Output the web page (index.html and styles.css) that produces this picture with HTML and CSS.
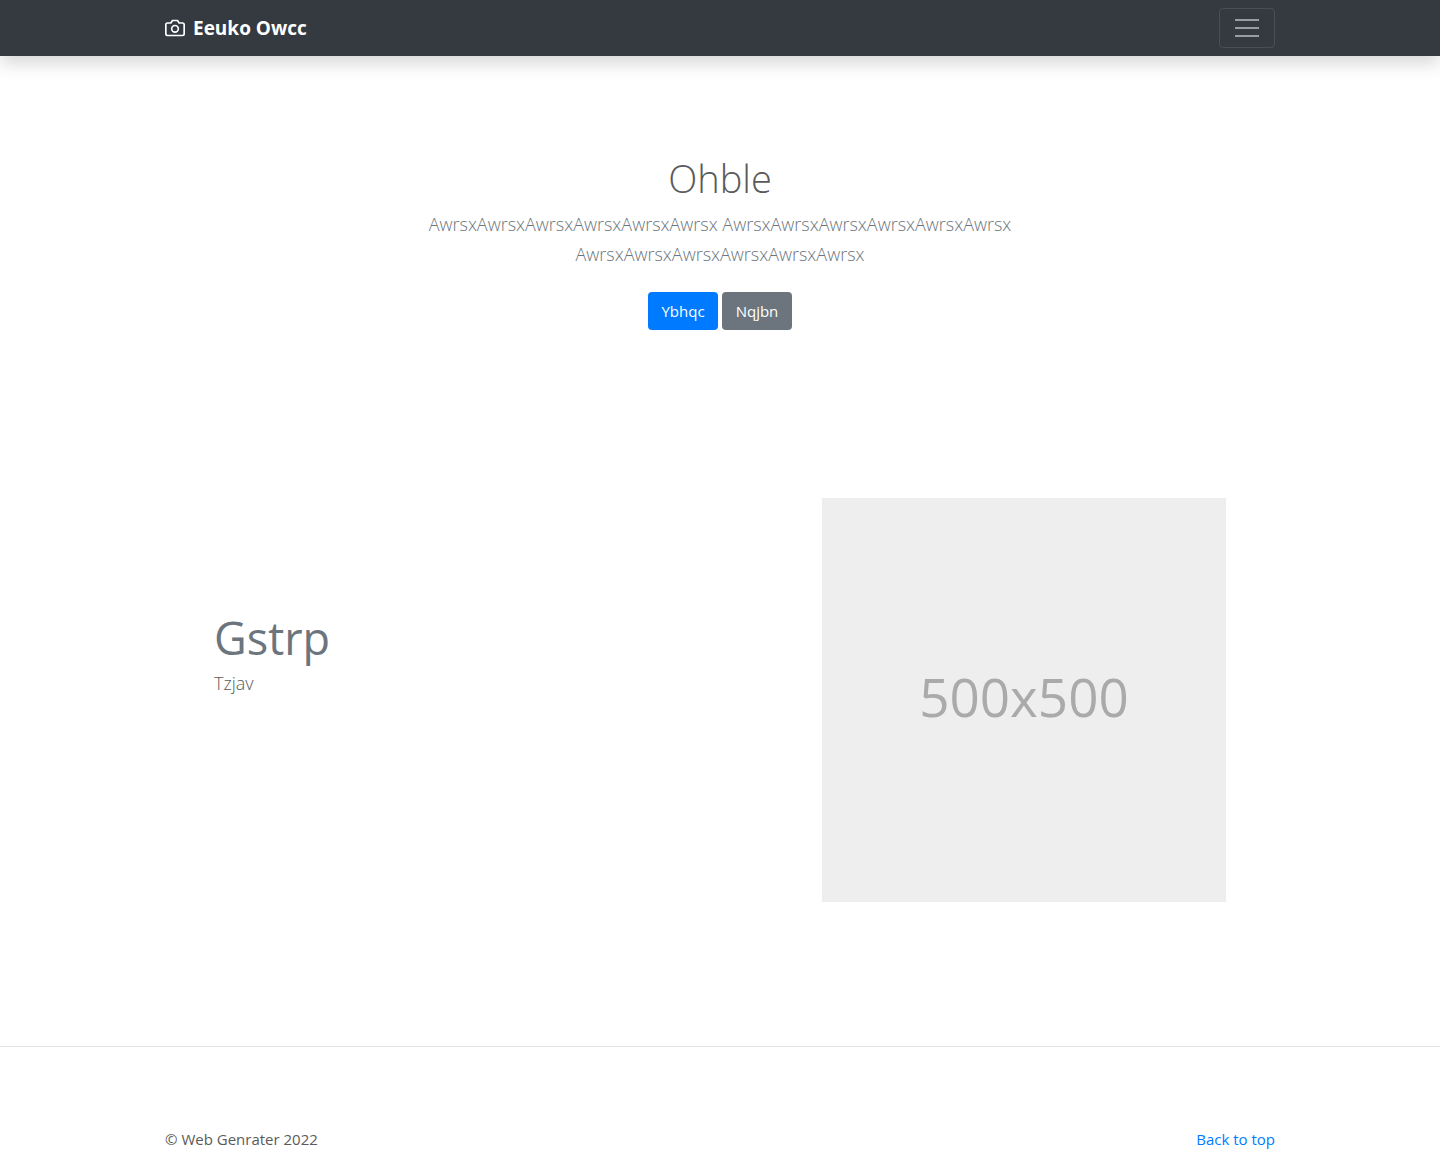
FILE: index.html
```html
<!DOCTYPE html>
<html lang="en">
<head>
<meta charset="utf-8">
<meta name="viewport" content="width=device-width, initial-scale=1">
<title>Eeuko Owcc</title>
<link rel="stylesheet" href="styles.css">
</head>
<body>
<header class="navbar" id="top">
  <div class="container navbar-row">
    <a class="brand" href="#">
      <svg class="brand-icon" viewBox="0 0 24 24" width="20" height="20" fill="none" stroke="currentColor" stroke-width="2" stroke-linecap="round" stroke-linejoin="round" aria-hidden="true"><path d="M23 19a2 2 0 0 1-2 2H3a2 2 0 0 1-2-2V8a2 2 0 0 1 2-2h4l2-3h6l2 3h4a2 2 0 0 1 2 2z"/><circle cx="12" cy="13" r="4"/></svg>
      <strong>Eeuko Owcc</strong>
    </a>
    <button class="toggler" type="button" aria-label="Toggle navigation">
      <svg viewBox="0 0 30 30" width="30" height="30" stroke="currentColor" stroke-width="2" stroke-miterlimit="10" aria-hidden="true"><path d="M3 7h24M3 15h24M3 23h24"/></svg>
    </button>
  </div>
</header>
<main>
  <section class="hero">
    <h1 class="hero-title">Ohble</h1>
    <p class="lead hero-lead">AwrsxAwrsxAwrsxAwrsxAwrsxAwrsx AwrsxAwrsxAwrsxAwrsxAwrsxAwrsx AwrsxAwrsxAwrsxAwrsxAwrsxAwrsx</p>
    <div class="actions">
      <button class="btn btn-primary" type="button">Ybhqc</button>
      <button class="btn btn-secondary" type="button">Nqjbn</button>
    </div>
  </section>
  <section class="container feature">
    <div class="feature-text">
      <h2 class="feature-title">Gstrp</h2>
      <p class="lead">Tzjav</p>
    </div>
    <div class="placeholder">500x500</div>
  </section>
</main>
<footer class="footer">
  <div class="container footer-row">
    <p class="copyright">© Web Genrater 2022</p>
    <a class="top-link" href="#top">Back to top</a>
  </div>
</footer>
</body>
</html>
```
FILE: styles.css
```css
*, *::before, *::after { box-sizing: border-box; }

body {
  margin: 0;
  font-family: "Segoe UI", "Open Sans", "Noto Sans", sans-serif;
  font-size: 15px;
  line-height: 24px;
  color: #5a5a5a;
  background: #fff;
}

h1, h2, p { margin: 0; }
a { color: #007bff; text-decoration: none; }

.container {
  width: 100%;
  max-width: 1140px;
  margin: 0 auto;
  padding: 0 15px;
}

.navbar {
  padding: 8px 0;
  background: #343a40;
  box-shadow: 0 8px 16px rgba(0, 0, 0, 0.15);
}

.navbar-row {
  display: flex;
  align-items: center;
  justify-content: space-between;
}

.brand {
  display: flex;
  align-items: center;
  gap: 8px;
  color: #fff;
  font-size: 19px;
  line-height: 30px;
}

.toggler {
  display: flex;
  align-items: center;
  justify-content: center;
  width: 56px;
  height: 40px;
  padding: 0;
  color: rgba(255, 255, 255, 0.5);
  background: transparent;
  border: 1px solid rgba(255, 255, 255, 0.1);
  border-radius: 4px;
}

.hero {
  padding: 98px 15px 96px;
  text-align: center;
}

.hero-title {
  margin-bottom: 7px;
  font-size: 38px;
  font-weight: 300;
  line-height: 48px;
}

.lead {
  font-size: 18px;
  font-weight: 300;
  line-height: 30px;
}

.hero-lead {
  max-width: 640px;
  margin: 0 auto;
  color: #6c757d;
}

.actions {
  display: flex;
  justify-content: center;
  gap: 4px;
  padding: 23px 0 24px;
}

.btn {
  min-width: 70px;
  padding: 6px 12px;
  font: inherit;
  color: #fff;
  border: 1px solid transparent;
  border-radius: 4px;
}

.btn-primary { background: #007bff; }
.btn-secondary { background: #6c757d; }

.feature {
  display: grid;
  grid-template-columns: 1fr minmax(0, 404px);
  align-items: start;
  padding: 48px 64px 144px;
}

.feature-text { padding-top: 110px; }

.feature-title {
  font-size: 45px;
  font-weight: 400;
  line-height: 60px;
  color: #6c757d;
}

.placeholder {
  display: flex;
  align-items: center;
  justify-content: center;
  aspect-ratio: 1;
  padding-bottom: 6px;
  font-family: "Open Sans", "Noto Sans", sans-serif;
  font-size: 53px;
  color: #aaa;
  background: #eee;
}

.footer {
  padding-top: 80px;
  border-top: 1px solid rgba(0, 0, 0, 0.1);
}

.footer-row {
  display: flex;
  justify-content: space-between;
}
```
